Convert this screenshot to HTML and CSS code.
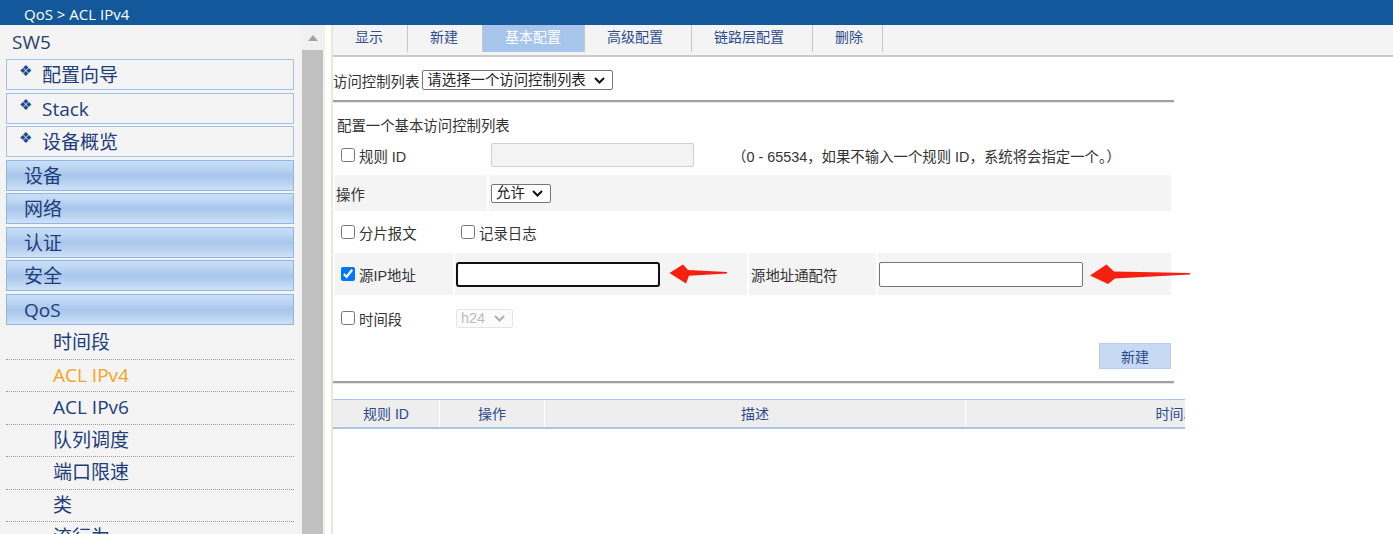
FILE: index.html
```html
<!DOCTYPE html>
<html lang="zh-CN">
<head>
<meta charset="utf-8">
<title>QoS &gt; ACL IPv4</title>
<link rel="stylesheet" href="styles.css">
</head>
<body>
<header class="topbar">QoS &gt; ACL IPv4</header>
<div class="layout">
  <aside class="sidebar">
    <div class="device">SW5</div>
    <div class="nav-item nav-plain"><span class="diamond">&#10070;</span>配置向导</div>
    <div class="nav-item nav-plain"><span class="diamond">&#10070;</span>Stack</div>
    <div class="nav-item nav-plain"><span class="diamond">&#10070;</span>设备概览</div>
    <div class="nav-item nav-cat">设备</div>
    <div class="nav-item nav-cat">网络</div>
    <div class="nav-item nav-cat">认证</div>
    <div class="nav-item nav-cat">安全</div>
    <div class="nav-item nav-cat">QoS</div>
    <ul class="sub-list">
      <li class="sub-item">时间段</li>
      <li class="sub-item sub-active">ACL IPv4</li>
      <li class="sub-item">ACL IPv6</li>
      <li class="sub-item">队列调度</li>
      <li class="sub-item">端口限速</li>
      <li class="sub-item">类</li>
      <li class="sub-item">流行为</li>
      <li class="sub-item">流策略</li>
    </ul>
  </aside>
  <div class="scrollbar">
    <div class="sb-arrow"><span class="sb-tri"></span></div>
    <div class="sb-thumb"></div>
  </div>
  <div class="gutter"></div>
  <main class="content">
    <nav class="tabs">
      <div class="tab tab-w75">显示</div>
      <div class="tab tab-w75">新建</div>
      <div class="tab tab-w102 tab-active">基本配置</div>
      <div class="tab tab-w107">高级配置</div>
      <div class="tab tab-w121">链路层配置</div>
      <div class="tab tab-w70">删除</div>
    </nav>
    <section class="panel">
      <div class="acl-row">
        <span>访问控制列表</span>
        <span class="sel-box">
          <select class="sel sel-acl"><option>请选择一个访问控制列表</option></select>
          <svg class="chev" width="11" height="7" viewBox="0 0 11 7"><path d="M1 1 L5.5 5.5 L10 1" fill="none" stroke="#111" stroke-width="2"/></svg>
        </span>
      </div>
      <hr class="rule">
      <div class="title">配置一个基本访问控制列表</div>
      <div class="form">
        <div class="row row-1">
          <div class="cell c-152 pad-cb"><input type="checkbox" class="cb"><span>规则 ID</span></div>
          <div class="cell c-682 pad-2">
            <input type="text" class="inp inp-disabled" disabled>
            <span class="hint">（0 - 65534，如果不输入一个规则 ID，系统将会指定一个。）</span>
          </div>
        </div>
        <div class="row row-2">
          <div class="cell c-152 shade pad-1">操作</div>
          <div class="cell c-682 shade pad-2">
            <span class="sel-box">
              <select class="sel sel-permit"><option>允许</option></select>
              <svg class="chev" width="11" height="7" viewBox="0 0 11 7"><path d="M1 1 L5.5 5.5 L10 1" fill="none" stroke="#111" stroke-width="2"/></svg>
            </span>
          </div>
        </div>
        <div class="row row-3">
          <div class="cell c-118 pad-cb"><input type="checkbox" class="cb"><span>分片报文</span></div>
          <div class="cell c-292 pad-cb"><input type="checkbox" class="cb"><span>记录日志</span></div>
        </div>
        <div class="row row-4">
          <div class="cell c-118 shade pad-cb"><input type="checkbox" class="cb" checked><span>源IP地址</span></div>
          <div class="cell c-292 shade pad-1">
            <input type="text" class="inp inp-focus">
            <svg class="arrow arrow-short" width="59" height="22" viewBox="0 0 59 22"><polygon points="0.5,10 14,1.5 19,7 58,9 58,10.5 20,12.8 17,20.5" fill="#f5200f"/></svg>
          </div>
          <div class="cell c-127 shade pad-2">源地址通配符</div>
          <div class="cell c-293 shade pad-1">
            <input type="text" class="inp inp-plain">
            <svg class="arrow arrow-long" width="102" height="22" viewBox="0 0 102 22"><polygon points="1,12.5 17.5,1.5 25,8.5 101,10 101,11.5 26,15.5 19,21" fill="#f5200f"/></svg>
          </div>
        </div>
        <div class="row row-5">
          <div class="cell c-118 pad-cb"><input type="checkbox" class="cb"><span>时间段</span></div>
          <div class="cell c-292 pad-1">
            <span class="sel-box">
              <select class="sel sel-time" disabled><option>h24</option></select>
              <svg class="chev" width="11" height="7" viewBox="0 0 11 7"><path d="M1 1 L5.5 5.5 L10 1" fill="none" stroke="#b0b0b0" stroke-width="2"/></svg>
            </span>
          </div>
        </div>
      </div>
      <div class="actions"><button class="btn">新建</button></div>
      <hr class="rule rule-2">
      <div class="grid-wrap">
        <div class="grid-head">
          <div class="col col-id">规则 ID</div>
          <div class="col col-op">操作</div>
          <div class="col col-desc">描述</div>
          <div class="col col-time">时间段</div>
        </div>
      </div>
    </section>
  </main>
</div>
</body>
</html>
```
FILE: styles.css
```css
html, body {
  margin: 0;
  height: 534px;
  overflow: hidden;
  background: #fff;
}
body {
  font-family: "Liberation Sans", "Noto Sans CJK SC", sans-serif;
  color: #333;
}

.topbar {
  height: 25px;
  background: #13589b;
  color: #fff;
  font-family: "Open Sans", "Noto Sans CJK SC", sans-serif;
  font-size: 15px;
  line-height: 29px;
  padding-left: 24px;
  overflow: hidden;
}

.layout {
  display: flex;
  height: 509px;
}

/* sidebar */
.sidebar {
  width: 300px;
  flex-shrink: 0;
  background: #f4f4f4;
  overflow: hidden;
  font-family: "Open Sans", "Noto Sans CJK SC", sans-serif;
  font-size: 19px;
  color: #203d7c;
}
.device {
  height: 34px;
  line-height: 34px;
  padding-left: 12px;
  color: #2b3e6c;
}
.nav-item {
  margin: 0 6px 2.5px;
  height: 29px;
  line-height: 30px;
  border: 1px solid #9fc1ea;
  white-space: nowrap;
}
.nav-plain {
  background: #f4f4f4;
  padding-left: 12px;
}
.diamond {
  display: inline-block;
  vertical-align: top;
  width: 23px;
  font-family: "DejaVu Sans", sans-serif;
  font-size: 15px;
  line-height: 22px;
  color: #1f4a8c;
}
.nav-cat {
  padding-left: 17px;
  border-color: #8fb7e6;
  background: linear-gradient(#cbdff6 0%, #bcd5f2 25%, #a8c6eb 50%, #b9d2f1 75%, #cfe1f7 100%);
}
.sub-list {
  list-style: none;
  margin: 0;
  padding: 0;
}
.sub-item {
  margin: 0 6px;
  height: 31.5px;
  line-height: 31.5px;
  padding-left: 47px;
  border-bottom: 1px dotted #9a9a9a;
  white-space: nowrap;
}
.sub-active {
  color: #f7a21d;
}

/* fake scrollbar */
.scrollbar {
  width: 25px;
  flex-shrink: 0;
  background: #f1f1f1;
  display: flex;
  flex-direction: column;
  align-items: center;
}
.sb-arrow {
  height: 25px;
  display: flex;
  align-items: center;
  justify-content: center;
}
.sb-tri {
  width: 0;
  height: 0;
  border-left: 5.5px solid transparent;
  border-right: 5.5px solid transparent;
  border-bottom: 6px solid #a3a3a3;
}
.sb-thumb {
  width: 21px;
  flex: 1;
  background: #c1c1c1;
}
.gutter {
  width: 6px;
  flex-shrink: 0;
  background: #fff;
  border-right: 2px solid #ebe8d8;
}

/* content */
.content {
  flex: 1;
  min-width: 0;
}
.tabs {
  display: flex;
  height: 30px;
  background: #f4f4f4;
  border-bottom: 2px solid #c8c8c8;
}
.tab {
  box-sizing: border-box;
  height: 27px;
  line-height: 25px;
  padding-left: 22px;
  font-size: 14px;
  color: #2e4d8d;
  border-right: 1px solid #c6c6c6;
  white-space: nowrap;
}
.tab-w75 { width: 75px; }
.tab-w102 { width: 102px; }
.tab-w107 { width: 107px; }
.tab-w121 { width: 121px; }
.tab-w70 { width: 70px; }
.tab-active {
  background: #a7c4ea;
  color: #fff;
}

.panel {
  width: 841px;
  font-size: 14.4px;
}
.acl-row {
  margin-top: 13px;
  height: 20px;
  display: flex;
  align-items: center;
  gap: 3px;
}
.sel-box {
  position: relative;
  display: inline-flex;
}
.sel {
  -webkit-appearance: none;
  appearance: none;
  font-family: "Liberation Sans", "Noto Sans CJK SC", sans-serif;
  font-size: 14.4px;
  line-height: 17px;
  color: #222;
  background: #fff;
  border: 1px solid #767676;
  border-radius: 2px;
  padding: 0 0 0 4px;
  margin: 0;
  box-sizing: border-box;
}
.chev {
  position: absolute;
  right: 8px;
  top: 50%;
  margin-top: -3px;
  pointer-events: none;
}
.sel-acl { width: 191px; height: 20px; }
.sel-permit { width: 60px; height: 19px; }
.sel-time {
  width: 57px;
  height: 19px;
  color: #a0a0a0;
  border-color: #dadada;
  background: #fafafa;
}

.rule {
  width: 841px;
  height: 0;
  margin: 10px 0 0;
  border: 0;
  border-top: 2px solid #a0a0a0;
  border-bottom: 1px solid #e6e6e6;
}
.rule-2 { margin-top: 12px; }

.title {
  margin-top: 13px;
  height: 20px;
  line-height: 20px;
  padding-left: 4px;
}

.form {
  margin: 1px 0 0 2px;
  width: 836px;
  display: flex;
  flex-direction: column;
  gap: 2px;
}
.row {
  display: flex;
  gap: 2px;
}
.row-1 { height: 36px; }
.row-2 { height: 36px; }
.row-3 { height: 38px; }
.row-4 { height: 42px; }
.row-5 { height: 42px; }

.cell {
  box-sizing: border-box;
  display: flex;
  align-items: center;
  white-space: nowrap;
  flex-shrink: 0;
}
.shade { background: #f4f4f4; }
.c-152 { width: 152px; }
.c-682 { width: 682px; }
.c-118 { width: 118px; }
.c-292 { width: 292px; }
.c-127 { width: 127px; }
.c-293 { width: 293px; }
.pad-cb { padding-left: 6px; }
.pad-1 { padding-left: 1px; }
.pad-2 { padding-left: 2px; }

.cb {
  width: 14px;
  height: 14px;
  margin: 0 4px 0 0;
  flex-shrink: 0;
}

.inp {
  box-sizing: border-box;
  width: 204px;
  height: 25px;
  margin: 0;
  padding: 0 4px;
  font-size: 14px;
  background: #fff;
  flex-shrink: 0;
}
.inp-disabled {
  width: 203px;
  height: 24px;
  background: #f3f3f3;
  border: 1px solid #cfcfcf;
  border-radius: 2px;
}
.inp-focus {
  border: 2px solid #111;
  border-radius: 3px;
  outline: none;
}
.inp-plain {
  border: 1px solid #767676;
  border-radius: 2px;
}
.hint {
  margin-left: 38px;
  color: #333;
}
.arrow {
  flex-shrink: 0;
  display: block;
}
.arrow-short { margin-left: 9px; }
.arrow-long { margin-left: 6px; }

.actions {
  width: 838px;
  margin-top: 4px;
  display: flex;
  justify-content: flex-end;
}
.btn {
  box-sizing: border-box;
  width: 72px;
  height: 26px;
  margin: 0;
  padding: 0;
  background: #c8daf3;
  border: 1px solid #b5ceee;
  color: #2b4a8c;
  font-family: "Liberation Sans", "Noto Sans CJK SC", sans-serif;
  font-size: 14px;
}

.grid-wrap {
  margin-top: 15px;
  width: 852px;
  overflow: hidden;
}
.grid-head {
  display: flex;
  width: 1054px;
  height: 27px;
  background: #eeeeee;
  border-top: 1px solid #a9c4e8;
  border-bottom: 2px solid #a9c4e8;
}
.col {
  box-sizing: border-box;
  text-align: center;
  line-height: 29px;
  font-size: 14px;
  color: #2b4a8c;
  border-left: 1px solid #fff;
  flex-shrink: 0;
}
.col-id { width: 106px; border-left: 0; }
.col-op { width: 105px; }
.col-desc { width: 421px; }
.col-time { width: 422px; }
```
